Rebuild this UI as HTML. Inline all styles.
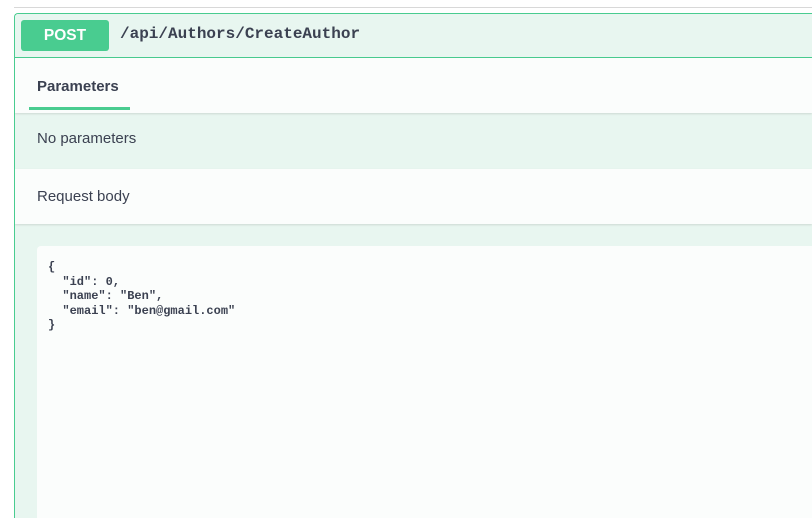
<!DOCTYPE html>
<html><head><style>
html,body{margin:0;padding:0;width:812px;height:518px;overflow:hidden;background:#fff;font-family:"Liberation Sans",sans-serif;}
.topline{position:absolute;left:14px;top:7px;width:798px;height:1px;background:#d8d8d8;}
.box{position:absolute;left:14px;top:13px;width:798px;height:505px;border:1px solid #49cc90;border-right:none;border-bottom:none;border-radius:4px 0 0 0;background:#e8f6f0;box-sizing:border-box;overflow:hidden;}
.hdr{position:absolute;left:0;top:0;right:0;height:43px;border-bottom:1px solid #49cc90;background:#e8f6f0;}
.post{position:absolute;left:6px;top:6px;width:88px;height:31px;background:#49cc90;border-radius:3px;color:#fff;font-weight:bold;font-size:15.5px;line-height:31px;text-align:center;}
.path{position:absolute;left:105px;top:11px;font-family:"Liberation Mono",monospace;font-weight:bold;font-size:16px;color:#3b4151;}
.tabs{position:absolute;left:0;top:44px;right:0;height:55px;background:#fbfdfc;box-shadow:0 1px 2px rgba(0,0,0,.12);}
.tab{position:absolute;left:22px;top:20px;font-weight:bold;font-size:15px;color:#3b4151;}
.ul{position:absolute;left:14px;top:49px;width:101px;height:3px;background:#49cc90;}
.nop{position:absolute;left:22px;top:116px;font-size:15px;color:#3b4151;}
.rb{position:absolute;left:0;top:155px;right:0;height:55px;background:#fbfdfc;box-shadow:0 1px 2px rgba(0,0,0,.12);}
.rbt{position:absolute;left:22px;top:19px;font-size:15px;color:#3b4151;}
.ta{position:absolute;left:22px;top:232px;width:776px;height:272px;background:#fbfdfc;border-radius:4px 0 0 0;}
pre{margin:0;position:absolute;left:11px;top:14px;font-family:"Liberation Mono",monospace;font-weight:bold;font-size:12px;line-height:14.6px;color:#3b4151;}
</style></head><body>
<div class="topline"></div>
<div class="box">
 <div class="hdr"><div class="post">POST</div><div class="path">/api/Authors/CreateAuthor</div></div>
 <div class="tabs"><div class="tab">Parameters</div><div class="ul"></div></div>
 <div class="nop">No parameters</div>
 <div class="rb"><div class="rbt">Request body</div></div>
 <div class="ta"><pre>{
  "id": 0,
  "name": "Ben",
  "email": "ben@gmail.com"
}</pre></div>
</div>
</body></html>
